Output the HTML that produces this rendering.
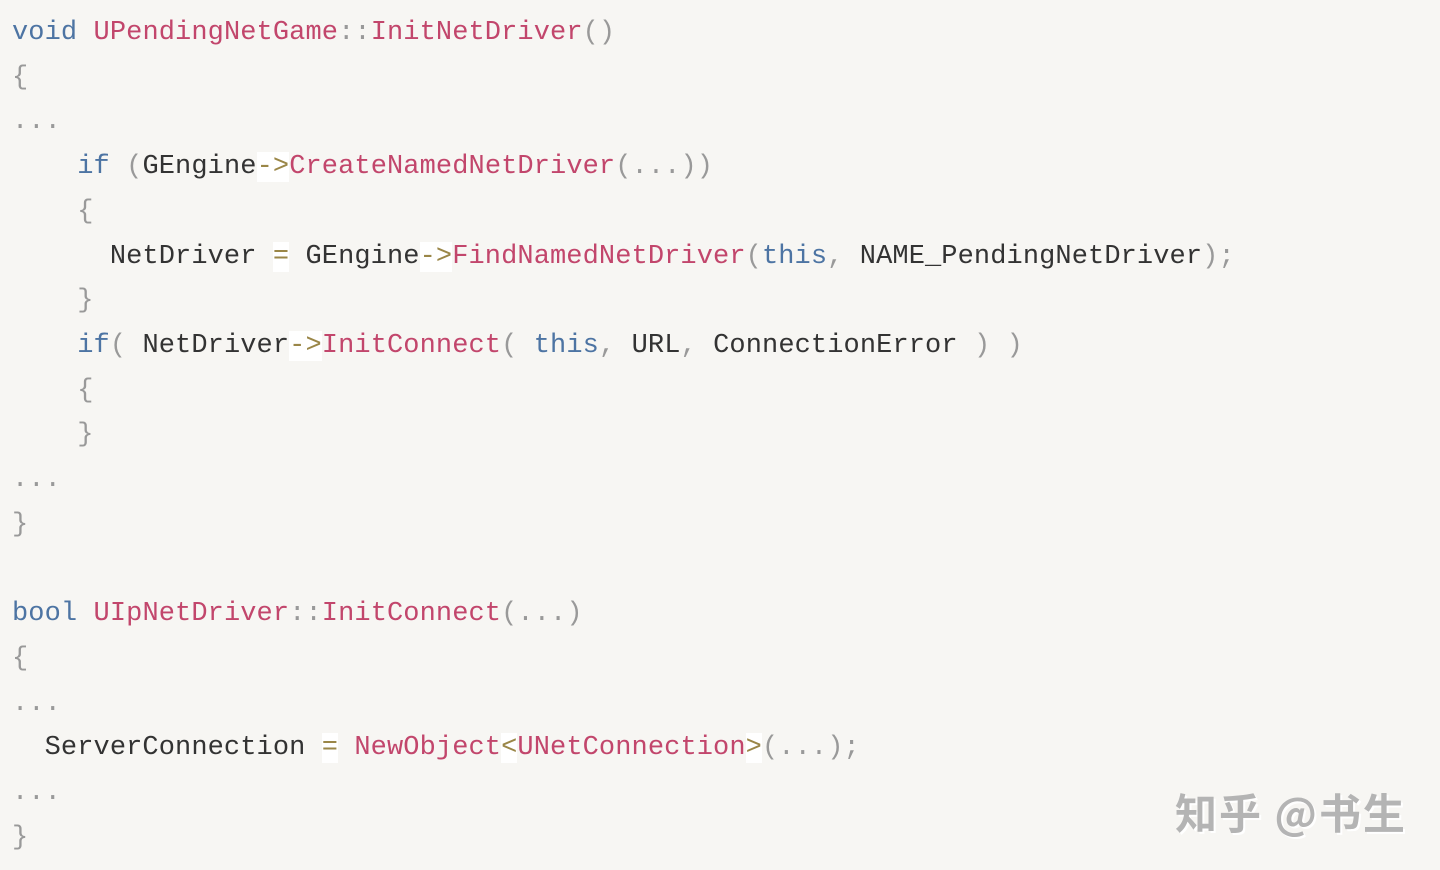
<!DOCTYPE html>
<html><head><meta charset="utf-8"><style>
html,body{margin:0;padding:0;background:#f7f6f3;width:1440px;height:870px;overflow:hidden}
pre{margin:0;padding:11px 0 0 12px;font-family:"Liberation Mono",monospace;font-size:27px;line-height:44.7px;color:#333;letter-spacing:0.1px}
.k{color:#4d74a3}.f{color:#c2466c}.p{color:#999}.o{color:#9a8647;background:#fff}
.wm{position:absolute;left:1175px;top:781px;font-family:"Noto Sans CJK SC",sans-serif;font-size:42px;font-weight:bold;color:#b4b4b4;text-shadow:2px 2px 0 #fff;letter-spacing:2px}
</style></head><body>
<pre><span class="k">void</span> <span class="f">UPendingNetGame</span><span class="p">::</span><span class="f">InitNetDriver</span><span class="p">()</span>
<span class="p">{</span>
<span class="p">...</span>
    <span class="k">if</span> <span class="p">(</span>GEngine<span class="o">-&gt;</span><span class="f">CreateNamedNetDriver</span><span class="p">(...))</span>
    <span class="p">{</span>
      NetDriver <span class="o">=</span> GEngine<span class="o">-&gt;</span><span class="f">FindNamedNetDriver</span><span class="p">(</span><span class="k">this</span><span class="p">,</span> NAME_PendingNetDriver<span class="p">);</span>
    <span class="p">}</span>
    <span class="k">if</span><span class="p">(</span> NetDriver<span class="o">-&gt;</span><span class="f">InitConnect</span><span class="p">(</span> <span class="k">this</span><span class="p">,</span> URL<span class="p">,</span> ConnectionError <span class="p">)</span> <span class="p">)</span>
    <span class="p">{</span>
    <span class="p">}</span>
<span class="p">...</span>
<span class="p">}</span>

<span class="k">bool</span> <span class="f">UIpNetDriver</span><span class="p">::</span><span class="f">InitConnect</span><span class="p">(...)</span>
<span class="p">{</span>
<span class="p">...</span>
  ServerConnection <span class="o">=</span> <span class="f">NewObject</span><span class="o">&lt;</span><span class="f">UNetConnection</span><span class="o">&gt;</span><span class="p">(...);</span>
<span class="p">...</span>
<span class="p">}</span></pre>
<div class="wm">知乎 @书生</div>
</body></html>
